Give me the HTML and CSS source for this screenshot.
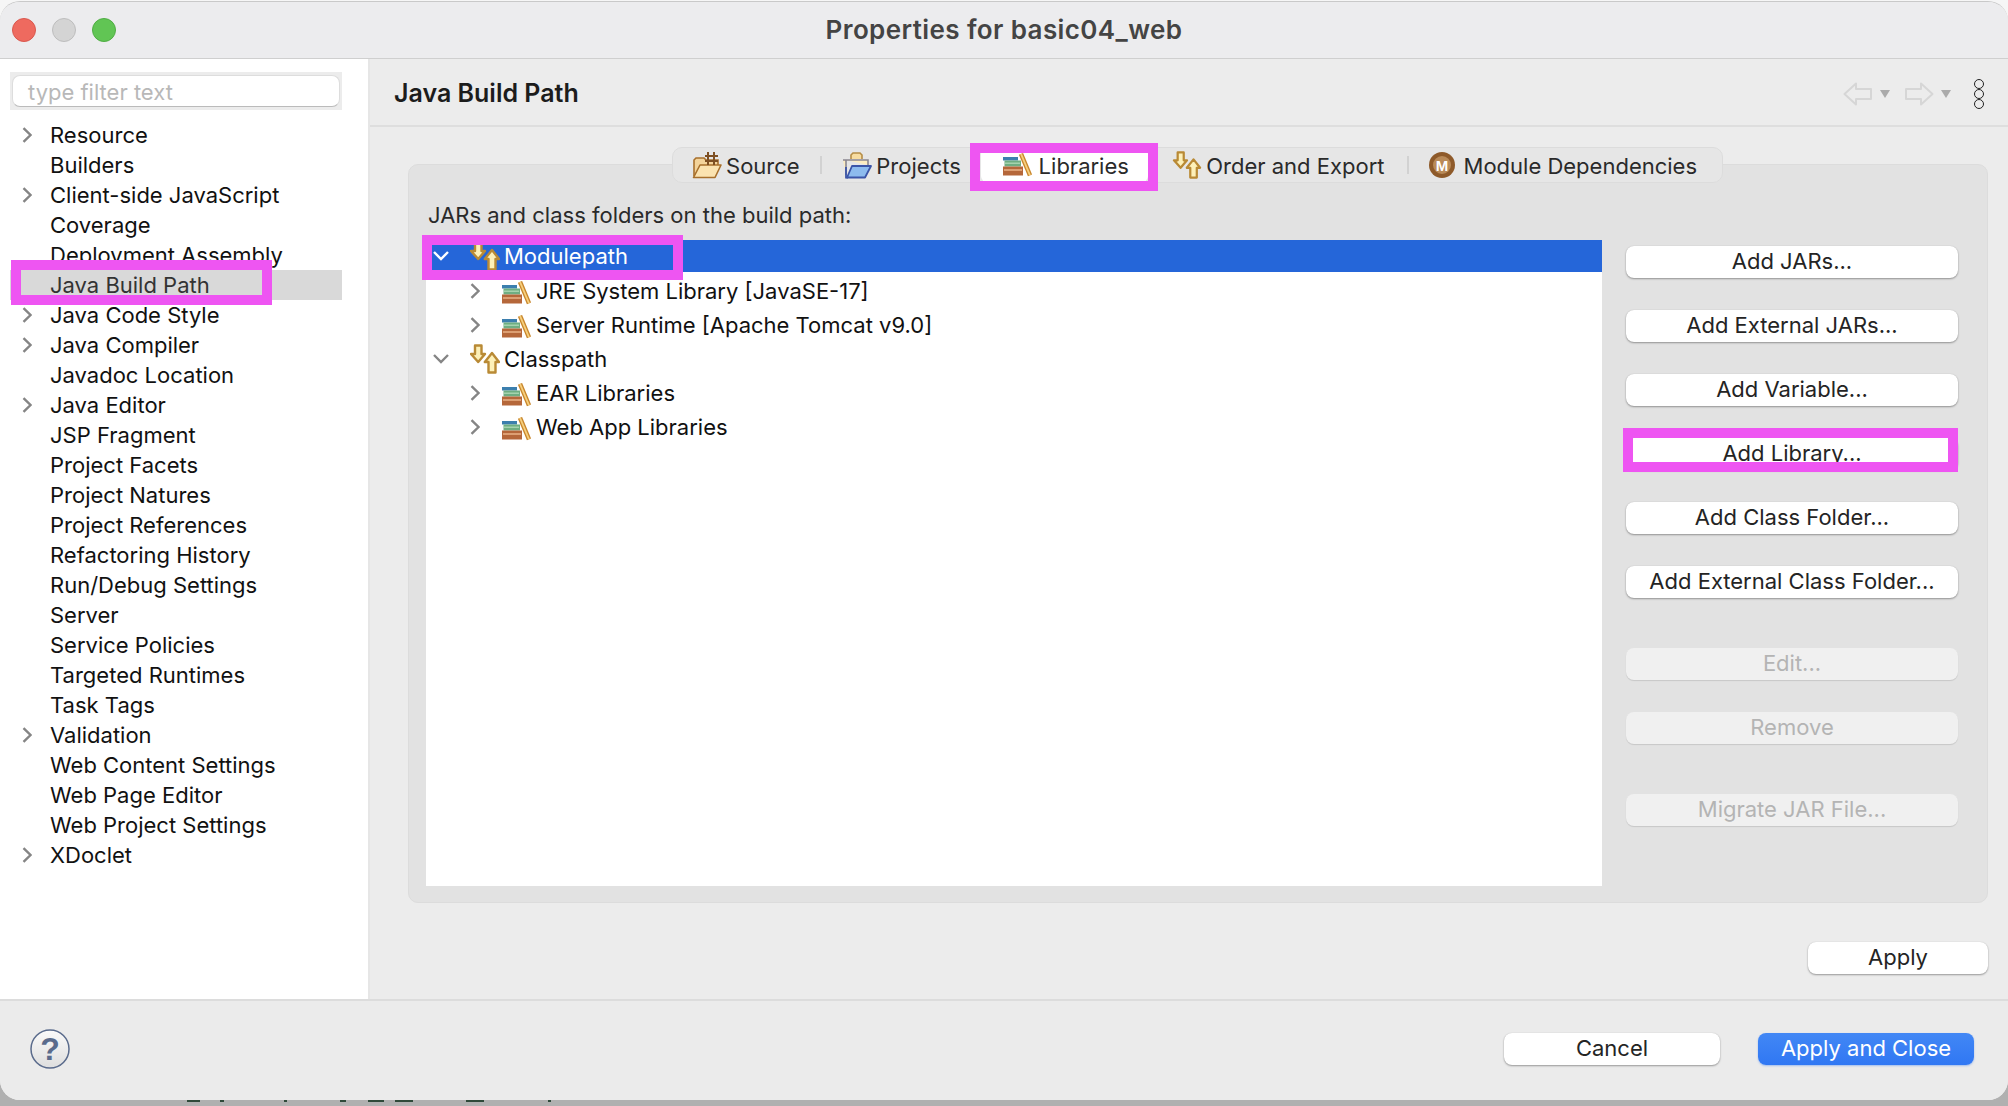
FILE: index.html
```html
<!DOCTYPE html>
<html lang="en">
<head>
    <meta charset="UTF-8">
    <title>Properties for basic04_web</title>
    <link rel="stylesheet" href="styles.css">
</head>
<body>
    <svg class="defs" width="0" height="0">
        <symbol id="lib" viewBox="0 0 30 24">
            <rect x="0" y="4" width="15" height="3.5" fill="#3c7fae"/>
            <rect x="1.5" y="7.5" width="16.5" height="6" fill="#6fae82"/>
            <rect x="2" y="9.5" width="15" height="1.5" fill="#a5d3ae"/>
            <rect x="0" y="13.5" width="20" height="9" fill="#b5673a"/>
            <rect x="1" y="16" width="18" height="2" fill="#dc9f73"/>
            <path d="M18 .8l9 21.6" stroke="#c8862c" stroke-width="4.5" fill="none"/>
            <path d="M18 .8l9 21.6" stroke="#f6cf7e" stroke-width="1.8" fill="none"/>
        </symbol>
        <symbol id="arrows" viewBox="0 0 30 30">
            <path d="M5 1.500h6.500v8.500h3.500l-6.800 8-7.200-8h4z" fill="#fdf0b8" stroke="#b98a35" stroke-width="2.400" stroke-linejoin="round"/>
            <path d="M18.500 28.500h7v-10.500h3.500l-7-9-7.200 9h3.700z" fill="#fdf0b8" stroke="#b98a35" stroke-width="2.400" stroke-linejoin="round"/>
        </symbol>
        <symbol id="chev-right" viewBox="0 0 10 16">
            <path d="M1.5 1.2l7 6.8-7 6.8" fill="none" stroke="#858585" stroke-width="2.4"/>
        </symbol>
    </svg>

    <div class="page">
        <div class="window">
            <div class="titlebar">
                <div class="lights">
                    <span class="light light-red"></span>
                    <span class="light light-gray"></span>
                    <span class="light light-green"></span>
                </div>
                <span class="title">Properties for basic04_web</span>
            </div>

            <div class="main">
                <div class="sidebar">
                    <div class="filter"><div class="filter-input">type filter text</div></div>
                    <ul class="nav-tree">
                        <li class="nav-row"><svg class="chev"><use href="#chev-right"/></svg>Resource</li>
                        <li class="nav-row leaf">Builders</li>
                        <li class="nav-row"><svg class="chev"><use href="#chev-right"/></svg>Client-side JavaScript</li>
                        <li class="nav-row leaf">Coverage</li>
                        <li class="nav-row leaf">Deployment Assembly</li>
                        <li class="nav-row leaf active">Java Build Path</li>
                        <li class="nav-row"><svg class="chev"><use href="#chev-right"/></svg>Java Code Style</li>
                        <li class="nav-row"><svg class="chev"><use href="#chev-right"/></svg>Java Compiler</li>
                        <li class="nav-row leaf">Javadoc Location</li>
                        <li class="nav-row"><svg class="chev"><use href="#chev-right"/></svg>Java Editor</li>
                        <li class="nav-row leaf">JSP Fragment</li>
                        <li class="nav-row leaf">Project Facets</li>
                        <li class="nav-row leaf">Project Natures</li>
                        <li class="nav-row leaf">Project References</li>
                        <li class="nav-row leaf">Refactoring History</li>
                        <li class="nav-row leaf">Run/Debug Settings</li>
                        <li class="nav-row leaf">Server</li>
                        <li class="nav-row leaf">Service Policies</li>
                        <li class="nav-row leaf">Targeted Runtimes</li>
                        <li class="nav-row leaf">Task Tags</li>
                        <li class="nav-row"><svg class="chev"><use href="#chev-right"/></svg>Validation</li>
                        <li class="nav-row leaf">Web Content Settings</li>
                        <li class="nav-row leaf">Web Page Editor</li>
                        <li class="nav-row leaf">Web Project Settings</li>
                        <li class="nav-row"><svg class="chev"><use href="#chev-right"/></svg>XDoclet</li>
                    </ul>
                </div>

                <div class="content">
                    <div class="content-header">
                        <h1 class="content-title">Java Build Path</h1>
                        <div class="history">
                            <svg class="nav-arrow" viewBox="0 0 30 24"><path d="M1.500 12L13 1.500v5.500h15v10H13v5.500z" fill="none" stroke="#d6d6d6" stroke-width="2" stroke-linejoin="round"/></svg>
                            <span class="caret"></span>
                            <svg class="nav-arrow arrow-next" viewBox="0 0 30 24"><path d="M28.500 12L17 1.500v5.500H2v10h15v5.500z" fill="none" stroke="#d6d6d6" stroke-width="2" stroke-linejoin="round"/></svg>
                            <span class="caret"></span>
                            <div class="dots"><span></span><span></span><span></span></div>
                        </div>
                    </div>

                    <div class="pane">
                        <div class="tabs">
                            <div class="tab tab-source sep">
                                <svg class="tab-icon" viewBox="0 0 30 28">
                                    <path d="M2 25V9l2-2h8l2 2h12v6" fill="#f3d39a" stroke="#a8702c" stroke-width="1.600"/>
                                    <path d="M1.500 26.500L8 14h21l-6 12.500z" fill="#fbe3b0" stroke="#a8702c" stroke-width="1.600" stroke-linejoin="round"/>
                                    <path d="M16 1v13M22 1v13M13 5h13M13 10h13" stroke="#7d4f22" stroke-width="2" fill="none"/>
                                </svg>
                                <span>Source</span>
                            </div>
                            <div class="tab tab-projects">
                                <svg class="tab-icon" viewBox="0 0 30 28">
                                    <path d="M4 24V9h-3M4 9h22v5" fill="#fcecc0" stroke="#8a8790" stroke-width="1.600"/>
                                    <path d="M9 8V4l2-2h7l2 2v4" fill="#f7dca0" stroke="#b58d46" stroke-width="1.600"/>
                                    <path d="M5 26.500L10 15h19l-6 11.500z" fill="#8dbbee" stroke="#3b55a8" stroke-width="1.800" stroke-linejoin="round"/>
                                    <path d="M4 16v10.500h2" fill="none" stroke="#3b55a8" stroke-width="1.800"/>
                                </svg>
                                <span>Projects</span>
                            </div>
                            <div class="tab tab-libraries selected">
                                <svg class="tab-icon"><use href="#lib"/></svg>
                                <span>Libraries</span>
                            </div>
                            <div class="tab tab-order sep">
                                <svg class="tab-icon"><use href="#arrows"/></svg>
                                <span>Order and Export</span>
                            </div>
                            <div class="tab tab-module">
                                <svg class="tab-icon" viewBox="0 0 28 28">
                                    <circle cx="14" cy="14" r="13" fill="#8e5a2a"/>
                                    <circle cx="14" cy="14" r="9" fill="#b98a58"/>
                                    <text x="14" y="19.500" class="m-letter">M</text>
                                </svg>
                                <span>Module Dependencies</span>
                            </div>
                        </div>

                        <div class="panel">
                            <div class="panel-label">JARs and class folders on the build path:</div>
                            <div class="panel-body">
                                <div class="build-tree">
                                    <div class="build-row level-1 selected-row">
                                        <svg class="chev-down" viewBox="0 0 16 10"><path d="M1 1l7 7 7-7" fill="none" stroke="#fff" stroke-width="2.400"/></svg>
                                        <svg class="row-icon"><use href="#arrows"/></svg>
                                        <span>Modulepath</span>
                                    </div>
                                    <div class="build-row level-2">
                                        <svg class="chev-small"><use href="#chev-right"/></svg>
                                        <svg class="row-icon lib-icon"><use href="#lib"/></svg>
                                        <span>JRE System Library [JavaSE-17]</span>
                                    </div>
                                    <div class="build-row level-2">
                                        <svg class="chev-small"><use href="#chev-right"/></svg>
                                        <svg class="row-icon lib-icon"><use href="#lib"/></svg>
                                        <span>Server Runtime [Apache Tomcat v9.0]</span>
                                    </div>
                                    <div class="build-row level-1">
                                        <svg class="chev-down" viewBox="0 0 16 10"><path d="M1 1l7 7 7-7" fill="none" stroke="#858585" stroke-width="2.400"/></svg>
                                        <svg class="row-icon"><use href="#arrows"/></svg>
                                        <span>Classpath</span>
                                    </div>
                                    <div class="build-row level-2">
                                        <svg class="chev-small"><use href="#chev-right"/></svg>
                                        <svg class="row-icon lib-icon"><use href="#lib"/></svg>
                                        <span>EAR Libraries</span>
                                    </div>
                                    <div class="build-row level-2">
                                        <svg class="chev-small"><use href="#chev-right"/></svg>
                                        <svg class="row-icon lib-icon"><use href="#lib"/></svg>
                                        <span>Web App Libraries</span>
                                    </div>
                                </div>
                                <div class="side-buttons">
                                    <button class="btn">Add JARs...</button>
                                    <button class="btn">Add External JARs...</button>
                                    <button class="btn">Add Variable...</button>
                                    <button class="btn">Add Library...</button>
                                    <button class="btn">Add Class Folder...</button>
                                    <button class="btn">Add External Class Folder...</button>
                                    <button class="btn spaced" disabled>Edit...</button>
                                    <button class="btn" disabled>Remove</button>
                                    <button class="btn spaced" disabled>Migrate JAR File...</button>
                                </div>
                            </div>
                        </div>

                        <div class="apply-row"><button class="btn btn-apply">Apply</button></div>
                    </div>
                </div>
            </div>

            <div class="footer">
                <svg class="help" viewBox="0 0 40 40">
                    <defs>
                        <linearGradient id="help-fill" x1="0" y1="0" x2="0" y2="1">
                            <stop offset="0" stop-color="#fafafa"/>
                            <stop offset="1" stop-color="#dedede"/>
                        </linearGradient>
                    </defs>
                    <circle cx="20" cy="20" r="19" fill="url(#help-fill)" stroke="#5a6b8c" stroke-width="1.500"/>
                    <text x="20" y="31" class="help-mark">?</text>
                </svg>
                <div class="footer-buttons">
                    <button class="btn btn-wide">Cancel</button>
                    <button class="btn btn-wide btn-primary">Apply and Close</button>
                </div>
            </div>
        </div>
        <div class="desktop-strip"></div>

        <div class="mark mark-nav"></div>
        <div class="mark mark-tree"></div>
        <div class="mark mark-tab"></div>
        <div class="mark mark-button"></div>
    </div>
</body>
</html>
```

FILE: styles.css
```css
* {
    margin: 0;
    padding: 0;
    box-sizing: border-box;
}

html, body {
    width: 2008px;
    height: 1106px;
    overflow: hidden;
}

body {
    font-family: Inter, "Liberation Sans", sans-serif;
    font-size: 22px;
    color: #1c1c1c;
    background: #fff;
}

.defs {
    position: absolute;
}

.page {
    position: relative;
    width: 2008px;
    height: 1106px;
    padding-top: 1px;
    background: linear-gradient(#f6f6f6 50%, #b0b0b0 50%);
}

.window {
    width: 2008px;
    height: 1099px;
    display: flex;
    flex-direction: column;
    background: #ececec;
    border-radius: 20px;
    overflow: hidden;
    border-top: 1px solid #c9c9c9;
}

.desktop-strip {
    height: 2px;
    background: linear-gradient(to right,
        #b0b0b0 187px, #2f4a3a 187px, #2f4a3a 200px, #b0b0b0 200px,
        #b0b0b0 220px, #2f4a3a 220px, #2f4a3a 224px, #b0b0b0 224px,
        #b0b0b0 284px, #2f4a3a 284px, #2f4a3a 287px, #b0b0b0 287px,
        #b0b0b0 340px, #2f4a3a 340px, #2f4a3a 346px, #b0b0b0 346px,
        #b0b0b0 368px, #2f4a3a 368px, #2f4a3a 384px, #b0b0b0 384px,
        #b0b0b0 395px, #2f4a3a 395px, #2f4a3a 413px, #b0b0b0 413px,
        #b0b0b0 466px, #2f4a3a 466px, #2f4a3a 484px, #b0b0b0 484px,
        #b0b0b0 548px, #2f4a3a 548px, #2f4a3a 551px, #b0b0b0 551px);
}

/* title bar */
.titlebar {
    height: 57px;
    flex-shrink: 0;
    display: flex;
    align-items: center;
    justify-content: center;
    position: relative;
    border-bottom: 1px solid #cfcfcf;
    background: #ececee;
}

.lights {
    position: absolute;
    left: 12px;
    top: 16px;
    display: flex;
    gap: 16px;
}

.light {
    width: 24px;
    height: 24px;
    border-radius: 50%;
}

.light-red { background: #ee6a5f; border: 1px solid #d9584e; }
.light-gray { background: #d4d4d4; border: 1px solid #bdbdbd; }
.light-green { background: #61c554; border: 1px solid #50ad44; }

.title {
    font-size: 26px;
    font-weight: 600;
    color: #444;
    letter-spacing: 0.4px;
    margin-top: -2px;
}

.main {
    height: 940px;
    flex-shrink: 0;
    display: flex;
}

/* sidebar */
.sidebar {
    width: 368px;
    flex-shrink: 0;
    background: #fff;
    padding: 13px 26px 0 10px;
}

.filter {
    height: 38px;
    background: #ececec;
    padding: 3px 2px;
    margin-bottom: 10px;
}

.filter-input {
    height: 32px;
    background: #fff;
    border: 1px solid #ddd;
    border-bottom-color: #bbb;
    border-radius: 8px;
    padding-left: 15px;
    line-height: 33px;
    color: #b8b8b8;
}

.nav-tree {
    list-style: none;
}

.nav-row {
    height: 30px;
    display: flex;
    align-items: center;
    padding-left: 12px;
    white-space: nowrap;
    color: #111;
}

.nav-row.leaf {
    padding-left: 40px;
}

.nav-row.active {
    background: #d9d9d9;
    color: #333;
}

.chev {
    width: 10px;
    height: 16px;
    margin-right: 18px;
    flex-shrink: 0;
}

/* right side */
.content {
    flex: 1;
    display: flex;
    flex-direction: column;
    border-left: 2px solid #e6e6e6;
}

.content-header {
    height: 68px;
    flex-shrink: 0;
    display: flex;
    align-items: center;
    justify-content: space-between;
    padding: 0 24px 0 24px;
    border-bottom: 2px solid #dedede;
}

.content-title {
    font-size: 25px;
    font-weight: 600;
    color: #1c1c1c;
    margin-top: 1px;
}

.history {
    display: flex;
    align-items: center;
    margin-top: 3px;
}

.nav-arrow {
    width: 30px;
    height: 24px;
}

.arrow-next {
    margin-left: 14px;
}

.caret {
    width: 0;
    height: 0;
    margin-left: 7px;
    border-left: 5px solid transparent;
    border-right: 5px solid transparent;
    border-top: 8px solid #aaa;
}

.dots {
    display: flex;
    flex-direction: column;
    margin-left: 23px;
}

.dots span {
    width: 10px;
    height: 10px;
    border: 1.5px solid #222;
    border-radius: 50%;
}

.pane {
    flex: 1;
    padding: 20px 20px 0 38px;
}

.tabs {
    position: relative;
    width: 1051px;
    height: 36px;
    margin: 0 auto -19px;
    left: -1px;
    display: flex;
    background: #e6e6e6;
    border: 1px solid #dcdcdc;
    border-radius: 10px;
}

.tab {
    display: flex;
    align-items: center;
    justify-content: center;
    gap: 4px;
    height: 100%;
    color: #2a2a2a;
    position: relative;
}

.tab span {
    padding-top: 2px;
}

.tab.sep::after {
    content: "";
    position: absolute;
    right: 0;
    top: 8px;
    height: 18px;
    border-right: 2px solid #d2d2d2;
}

.tab-source { width: 150px; padding-right: 3px; }
.tab-projects { width: 159px; }
.tab-libraries { width: 167px; padding-left: 3px; gap: 6px; }
.tab-order { width: 262px; }
.tab-module { width: 313px; padding-right: 6px; }

.tab.selected {
    background: #fff;
    border-radius: 6px;
}

.tab-icon {
    width: 30px;
    height: 28px;
    flex-shrink: 0;
}

.tab-module .tab-icon {
    width: 28px;
    margin-right: 4px;
}

.m-letter {
    font-family: "Liberation Sans", sans-serif;
    font-size: 15px;
    font-weight: 700;
    fill: #fff;
    text-anchor: middle;
}

.panel {
    height: 739px;
    background: #e2e2e2;
    border: 1px solid #dcdcdc;
    border-radius: 10px;
    padding: 36px 0 0 17px;
}

.panel-label {
    height: 28px;
    line-height: 28px;
    margin-bottom: 11px;
    padding-left: 2px;
    color: #2a2a2a;
}

.panel-body {
    display: flex;
    gap: 24px;
}

.build-tree {
    width: 1176px;
    height: 646px;
    background: #fff;
}

.build-row {
    height: 34px;
    display: flex;
    align-items: center;
    color: #111;
    white-space: nowrap;
}

.level-1 { padding-left: 7px; }
.level-2 { padding-left: 44px; }

.selected-row {
    background: #2566d9;
    color: #fff;
    height: 32px;
    margin-bottom: 2px;
}

.chev-down {
    width: 16px;
    height: 10px;
    margin-right: 21px;
    flex-shrink: 0;
}

.chev-small {
    width: 10px;
    height: 16px;
    margin-right: 22px;
    flex-shrink: 0;
}

.row-icon {
    width: 30px;
    height: 30px;
    margin-right: 4px;
    flex-shrink: 0;
}

.lib-icon {
    height: 24px;
    margin-top: 3px;
}

.side-buttons {
    width: 332px;
    padding-top: 6px;
    display: flex;
    flex-direction: column;
    gap: 32px;
}

.btn {
    height: 32px;
    width: 100%;
    padding-bottom: 2px;
    font-family: inherit;
    font-size: 22px;
    color: #242424;
    background: #fff;
    border: none;
    border-radius: 8px;
    box-shadow: 0 1px 2px rgba(0, 0, 0, 0.35), 0 0 1px rgba(0, 0, 0, 0.15);
}

.btn:disabled {
    background: #f0f0f0;
    color: #b4b4b4;
    box-shadow: 0 1px 1px rgba(0, 0, 0, 0.12);
}

.btn.spaced {
    margin-top: 18px;
}

.apply-row {
    display: flex;
    justify-content: flex-end;
    margin-top: 39px;
}

.btn-apply {
    width: 180px;
}

/* footer */
.footer {
    flex: 1;
    display: flex;
    align-items: center;
    justify-content: space-between;
    padding: 0 34px 3px 30px;
    border-top: 2px solid #dcdcdc;
    background: #ebebeb;
}

.help {
    width: 40px;
    height: 40px;
}

.help-mark {
    font-family: "Liberation Sans", sans-serif;
    font-size: 32px;
    font-weight: 700;
    fill: #5a6b8c;
    text-anchor: middle;
}

.footer-buttons {
    display: flex;
    gap: 38px;
}

.btn-wide {
    width: 216px;
}

.btn-primary {
    color: #fff;
    background: linear-gradient(#4287f5, #3077f3);
    box-shadow: 0 1px 2px rgba(48, 119, 243, 0.4);
}

/* magenta annotation frames */
.mark {
    position: absolute;
    border: 10px solid #ee55f2;
}

.mark-nav { left: 11px; top: 260px; width: 261px; height: 45px; }
.mark-tree { left: 422px; top: 235px; width: 261px; height: 45px; }
.mark-tab { left: 970px; top: 143px; width: 188px; height: 48px; }
.mark-button { left: 1623px; top: 428px; width: 335px; height: 44px; }
```
